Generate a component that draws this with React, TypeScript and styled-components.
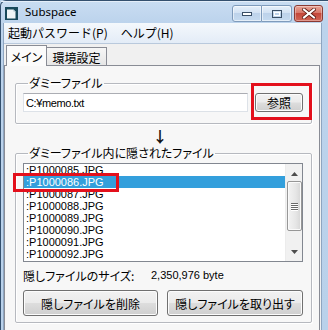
import styled, { createGlobalStyle } from "styled-components";

const jp = `"Noto Sans CJK JP", sans-serif`;
const latin = `"Liberation Sans", "Noto Sans CJK JP", sans-serif`;

const files = [
  ":P1000085.JPG",
  ":P1000086.JPG",
  ":P1000087.JPG",
  ":P1000088.JPG",
  ":P1000089.JPG",
  ":P1000090.JPG",
  ":P1000091.JPG",
  ":P1000092.JPG",
];

const GlobalStyle = createGlobalStyle`
  html, body {
    margin: 0;
    padding: 0;
    background: #b9d1ea;
  }
  body {
    width: 328px;
    height: 330px;
    overflow: hidden;
  }
`;

export default function App() {
  return (
    <>
      <GlobalStyle />
      <Window>
        <TitleBar>
          <AppIcon width="13" height="13" viewBox="0 0 13 13">
            <rect x="0" y="0" width="13" height="13" fill="#17485a" />
            <path d="M2 2.5 L8.5 2.5 L10.5 4.5 L10.5 11.5 L2 11.5 Z" fill="#eef4f6" />
            <path d="M8.5 2.5 L8.5 4.5 L10.5 4.5" fill="#9bb6c2" />
          </AppIcon>
          <Title>Subspace</Title>
          <Controls>
            <CtlButton $side="left">
              <svg width="12" height="6" viewBox="0 0 12 6">
                <rect x="1.5" y="1.5" width="9" height="3" fill="#fff" stroke="#3a4f66" />
              </svg>
            </CtlButton>
            <CtlButton $side="right">
              <svg width="10" height="8" viewBox="0 0 10 8">
                <rect x="0.5" y="0.5" width="9" height="7" fill="none" stroke="#3a4f66" />
                <rect x="2.5" y="2.5" width="5" height="3" fill="none" stroke="#fff" />
              </svg>
            </CtlButton>
            <CloseButton>
              <svg width="14" height="11" viewBox="0 0 14 11">
                <path d="M2 1.5 L12 9.5 M12 1.5 L2 9.5" stroke="#5a1a12" strokeWidth="3.6" strokeLinecap="square" />
                <path d="M2 1.5 L12 9.5 M12 1.5 L2 9.5" stroke="#fff" strokeWidth="2" strokeLinecap="square" />
              </svg>
            </CloseButton>
          </Controls>
        </TitleBar>

        <Client>
          <MenuBar>
            <MenuItem>起動パスワード(P)</MenuItem>
            <MenuItem>ヘルプ(H)</MenuItem>
          </MenuBar>

          <TabStrip>
            <Tab $active>メイン</Tab>
            <Tab>環境設定</Tab>
          </TabStrip>

          <Panel>
            <GroupBox>
              <Legend>ダミーファイル</Legend>
              <PathRow>
                <PathInput>C:¥memo.txt</PathInput>
                <Button $width={48} $height={19}>参照</Button>
              </PathRow>
            </GroupBox>

            <ArrowRow>↓</ArrowRow>

            <GroupBox $bottom={6}>
              <Legend>ダミーファイル内に隠されたファイル</Legend>
              <ListBox>
                <Items>
                  {files.map((f, i) => (
                    <Item key={f} $selected={i === 1}>
                      {f}
                    </Item>
                  ))}
                </Items>
                <ScrollBar>
                  <ScrollArrow viewBox="0 0 7 4" width="7" height="4">
                    <path d="M0 4 L3.5 0 L7 4 Z" fill="#4d4d4d" />
                  </ScrollArrow>
                  <Thumb>
                    <Grip />
                    <Grip />
                    <Grip />
                    <Grip />
                  </Thumb>
                  <Spacer />
                  <ScrollArrow viewBox="0 0 7 4" width="7" height="4">
                    <path d="M0 0 L3.5 4 L7 0 Z" fill="#4d4d4d" />
                  </ScrollArrow>
                </ScrollBar>
              </ListBox>
              <SizeRow>
                <SizeLabel>隠しファイルのサイズ:</SizeLabel>
                <SizeValue>2,350,976 byte</SizeValue>
              </SizeRow>
              <ButtonRow>
                <Button $width={135} $height={26}>隠しファイルを削除</Button>
                <Button $width={136} $height={26}>隠しファイルを取り出す</Button>
              </ButtonRow>
            </GroupBox>

            <Mark $x={246} $y={17} $w={61} $h={37} />
            <Mark $x={8} $y={107} $w={106} $h={19} />
          </Panel>
        </Client>
      </Window>
    </>
  );
}

const Window = styled.div`
  width: 328px;
  height: 330px;
  box-sizing: border-box;
  border-top: 1px solid #34506e;
  border-left: 1px solid #34506e;
  border-radius: 6px 0 0 0;
  background: linear-gradient(#c9ddf2 0px, #bcd3ec 22px, #b9d1ea 100%);
  display: flex;
  flex-direction: column;
`;

const TitleBar = styled.div`
  height: 22px;
  display: flex;
  align-items: flex-start;
  padding: 0 5px 0 4px;
  box-shadow: inset 0 1px 0 #e4eef9;
`;

const AppIcon = styled.svg`
  margin-top: 6px;
  flex: none;
`;

const Title = styled.div`
  margin: 3px 0 0 7px;
  font-family: "Noto Sans", sans-serif;
  font-size: 11.5px;
  line-height: 16px;
  color: #000;
`;

const Controls = styled.div`
  margin-left: auto;
  margin-top: 4px;
  display: flex;
`;

const CtlButton = styled.div<{ $side: "left" | "right" }>`
  width: 30px;
  height: 17px;
  box-sizing: border-box;
  display: flex;
  align-items: center;
  justify-content: center;
  border: 1px solid #7f9bbb;
  border-left-width: ${(p) => (p.$side === "right" ? 0 : 1)}px;
  border-radius: ${(p) => (p.$side === "left" ? "3px 0 0 3px" : "0 3px 3px 0")};
  background: linear-gradient(#e6f0fa 0%, #d3e2f3 45%, #bdd2ea 50%, #c6dbf0 100%);
  box-shadow: inset 0 0 0 1px rgba(255, 255, 255, 0.55);
`;

const CloseButton = styled.div`
  width: 29px;
  height: 17px;
  margin-left: 2px;
  box-sizing: border-box;
  display: flex;
  align-items: center;
  justify-content: center;
  border: 1px solid #8a3a33;
  border-radius: 3px;
  background: linear-gradient(#e8a496 0%, #d8786a 45%, #c4473a 50%, #d26656 100%);
  box-shadow: inset 0 0 0 1px rgba(255, 255, 255, 0.35);
`;

const Client = styled.div`
  flex: 1;
  margin: 0 6px 0 2px;
  border-left: 1px solid #8ea5c0;
  border-right: 1px solid #8ea5c0;
  background: #f0f0f0;
  display: flex;
  flex-direction: column;
  min-height: 0;
`;

const MenuBar = styled.div`
  height: 20px;
  display: flex;
  align-items: center;
  gap: 13px;
  padding-left: 4px;
  background: linear-gradient(#f4f8fc, #e3ecf7);
  border-bottom: 1px solid #b9c9dc;
`;

const MenuItem = styled.span`
  font-family: ${jp};
  font-size: 12px;
  line-height: 14px;
  color: #000;
`;

const TabStrip = styled.div`
  height: 21px;
  display: flex;
  align-items: flex-end;
  padding-left: 2px;
`;

const Tab = styled.div<{ $active?: boolean }>`
  box-sizing: border-box;
  height: ${(p) => (p.$active ? 21 : 18)}px;
  width: ${(p) => (p.$active ? 41 : 61)}px;
  margin-left: ${(p) => (p.$active ? 0 : -1)}px;
  margin-bottom: ${(p) => (p.$active ? -1 : 0)}px;
  position: relative;
  z-index: ${(p) => (p.$active ? 1 : 0)};
  border: 1px solid #898c95;
  border-bottom: none;
  background: ${(p) => (p.$active ? "#fbfbfb" : "linear-gradient(#f6f6f6, #e6e6e6)")};
  display: flex;
  align-items: center;
  justify-content: center;
  padding-top: ${(p) => (p.$active ? 0 : 1)}px;
  font-family: ${jp};
  font-size: 12px;
  font-feature-settings: "palt";
  color: #000;
`;

const Panel = styled.div`
  position: relative;
  flex: 1;
  margin-right: 1px;
  border: 1px solid #898c95;
  border-bottom: none;
  background: #f7f7f7;
  padding: 11px 7px 0 10px;
`;

const GroupBox = styled.fieldset<{ $bottom?: number }>`
  margin: 0;
  padding: 4px 8px ${(p) => p.$bottom ?? 11}px 7px;
  border: 1px solid #b6b9bf;
  border-radius: 2px;
  box-shadow: inset 1px 1px 0 #fff, 1px 1px 0 #fff;
  min-width: 0;
`;

const Legend = styled.legend`
  margin-left: 5px;
  padding: 0 1px;
  font-family: ${jp};
  font-size: 12px;
  line-height: 12px;
  font-feature-settings: "palt";
  color: #000;
`;

const PathRow = styled.div`
  display: flex;
  align-items: flex-start;
  gap: 7px;
`;

const PathInput = styled.div`
  width: 225px;
  height: 19px;
  box-sizing: border-box;
  border: 1px solid #dde2e8;
  border-top-color: #abadb3;
  background: #fff;
  padding: 0 2px;
  display: flex;
  align-items: center;
  font-family: ${latin};
  font-size: 11px;
  letter-spacing: -0.4px;
  color: #000;
`;

const Button = styled.div<{ $width: number; $height: number }>`
  width: ${(p) => p.$width}px;
  height: ${(p) => p.$height}px;
  box-sizing: border-box;
  flex: none;
  display: flex;
  align-items: center;
  justify-content: center;
  border: 1px solid #707070;
  border-radius: 3px;
  background: linear-gradient(#f2f2f2 0%, #ebebeb 48%, #dddddd 52%, #cfcfcf 100%);
  box-shadow: inset 0 0 0 1px #fcfcfc;
  font-family: ${jp};
  font-size: 12px;
  font-feature-settings: "palt";
  color: #000;
`;

const ArrowRow = styled.div`
  height: 23px;
  display: flex;
  align-items: center;
  justify-content: center;
  padding-right: 7px;
  font-family: ${jp};
  font-size: 15px;
  font-weight: 700;
  color: #111;
`;

const ListBox = styled.div`
  height: 99px;
  box-sizing: border-box;
  border: 1px solid #828790;
  background: #fff;
  display: flex;
  overflow: hidden;
`;

const Items = styled.div`
  flex: 1;
  padding-top: 0;
`;

const Item = styled.div<{ $selected?: boolean }>`
  height: 12px;
  line-height: 12px;
  padding-left: 2px;
  font-family: ${latin};
  font-size: 11px;
  color: ${(p) => (p.$selected ? "#fff" : "#000")};
  background: ${(p) => (p.$selected ? "#339fdc" : "transparent")};
`;

const ScrollBar = styled.div`
  width: 17px;
  flex: none;
  background: #f1f1f1;
  border-left: 1px solid #ececec;
  display: flex;
  flex-direction: column;
  align-items: center;
  padding: 8px 0 7px;
  box-sizing: border-box;
`;

const ScrollArrow = styled.svg`
  flex: none;
`;

const Thumb = styled.div`
  margin-top: 5px;
  width: 15px;
  height: 50px;
  box-sizing: border-box;
  border: 1px solid #979797;
  border-radius: 2px;
  background: linear-gradient(90deg, #f3f3f3, #e6e6e6 60%, #d6d6d6);
  box-shadow: inset 0 0 0 1px #fafafa;
  display: flex;
  flex-direction: column;
  align-items: center;
  justify-content: center;
  gap: 1px;
`;

const Grip = styled.div`
  width: 7px;
  height: 1px;
  background: #6a6a6a;
  box-shadow: 0 1px 0 #fff;
`;

const Spacer = styled.div`
  flex: 1;
`;

const SizeRow = styled.div`
  display: flex;
  align-items: center;
  margin-top: 7px;
  height: 12px;
`;

const SizeLabel = styled.span`
  width: 128px;
  font-family: ${jp};
  font-size: 12px;
  font-feature-settings: "palt";
  color: #000;
`;

const SizeValue = styled.span`
  font-family: ${latin};
  font-size: 11px;
  color: #000;
`;

const ButtonRow = styled.div`
  display: flex;
  gap: 9px;
  margin-top: 9px;
`;

const Mark = styled.div<{ $x: number; $y: number; $w: number; $h: number }>`
  position: absolute;
  left: ${(p) => p.$x}px;
  top: ${(p) => p.$y}px;
  width: ${(p) => p.$w}px;
  height: ${(p) => p.$h}px;
  box-sizing: border-box;
  border: 3px solid #e3101c;
  pointer-events: none;
`;
